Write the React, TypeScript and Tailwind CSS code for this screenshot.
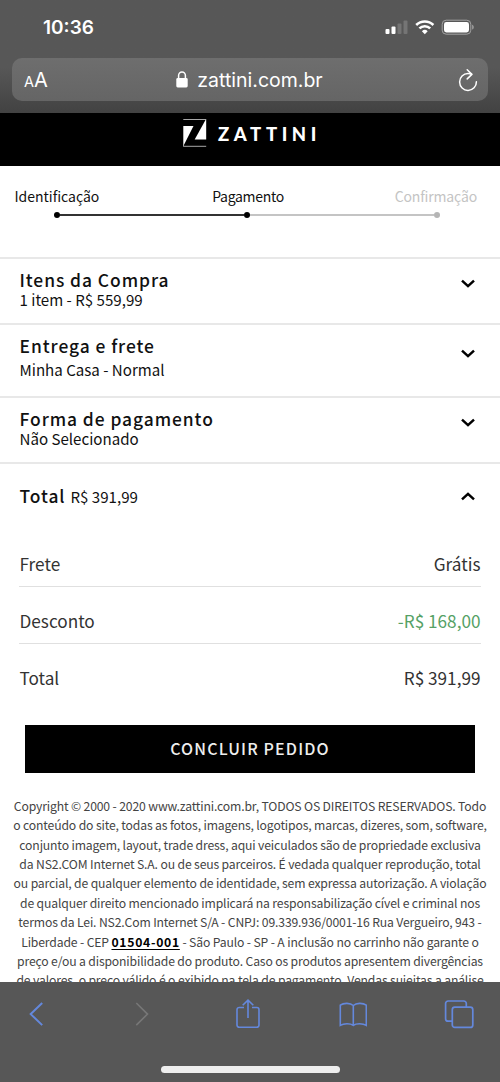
import type { ReactNode } from "react";

const footerLines: ReactNode[] = [
  "Copyright © 2000 - 2020 www.zattini.com.br, TODOS OS DIREITOS RESERVADOS. Todo",
  "o conteúdo do site, todas as fotos, imagens, logotipos, marcas, dizeres, som, software,",
  "conjunto imagem, layout, trade dress, aqui veiculados são de propriedade exclusiva",
  "da NS2.COM Internet S.A. ou de seus parceiros. É vedada qualquer reprodução, total",
  "ou parcial, de qualquer elemento de identidade, sem expressa autorização. A violação",
  "de qualquer direito mencionado implicará na responsabilização cível e criminal nos",
  "termos da Lei. NS2.Com Internet S/A - CNPJ: 09.339.936/0001-16 Rua Vergueiro, 943 -",
  <>
    Liberdade - CEP{" "}
    <a className="font-bold tracking-[0.7px] text-black underline underline-offset-2">01504-001</a> - São Paulo - SP - A
    inclusão no carrinho não garante o
  </>,
  "preço e/ou a disponibilidade do produto. Caso os produtos apresentem divergências",
  "de valores, o preço válido é o exibido na tela de pagamento. Vendas sujeitas a análise",
];

function Chevron({ up = false }: { up?: boolean }) {
  return (
    <svg width="14" height="9" viewBox="0 0 14 9" fill="none" stroke="#000" strokeWidth="2.5">
      <path d={up ? "M1 7.4 7 1.9l6 5.5" : "M1 1.6 7 7.1l6-5.5"} />
    </svg>
  );
}

function StatusBar() {
  return (
    <div className="flex h-[58px] justify-between pl-[43px] pr-[26px]">
      <span className="mt-[15px] font-['Inter'] text-[19px] leading-[26px] font-semibold">10:36</span>
      <svg className="mt-[19px]" width="89" height="17" viewBox="0 0 89 17">
        <rect x="0.5" y="10" width="4" height="5" rx="1" fill="#fff" />
        <rect x="6.5" y="7.5" width="4" height="7.5" rx="1" fill="#fff" />
        <rect x="12.5" y="4.5" width="4" height="10.5" rx="1" fill="#757575" />
        <rect x="18.5" y="1.5" width="4" height="13.5" rx="1" fill="#757575" />
        <g fill="none" stroke="#fff" strokeWidth="2.5">
          <path d="M31.2 6a12.2 12.2 0 0 1 17.2 0" />
          <path d="M34.4 9.4a7.6 7.6 0 0 1 10.8 0" />
        </g>
        <path d="M39.8 15.2 36.9 12.2a4.1 4.1 0 0 1 5.8 0z" fill="#fff" />
        <rect x="57.2" y="1.2" width="28.6" height="14" rx="4" fill="none" stroke="#a3a3a3" strokeWidth="1" />
        <rect x="59" y="3" width="25" height="10.4" rx="2.4" fill="#fff" />
        <path d="M87.2 5.8c2 .6 2 4.2 0 4.8z" fill="#a3a3a3" />
      </svg>
    </div>
  );
}

function AddressBar() {
  return (
    <div className="mx-3 flex h-[43px] items-center justify-between rounded-[10px] bg-linear-to-b from-[#6e6e6e] to-[#656565] pl-3 pr-[10px] font-['Inter']">
      <div className="flex w-[49px] items-baseline pt-px">
        <span className="text-[14.5px]">A</span>
        <span className="text-[20px]">A</span>
      </div>
      <div className="flex items-center gap-[9px]">
        <svg width="12" height="17" viewBox="0 0 12 17">
          <rect x="0.3" y="7" width="11.4" height="9.5" rx="1.4" fill="#fff" />
          <path d="M2.6 8V4.6a3.4 3.6 0 0 1 6.8 0V8" fill="none" stroke="#fff" strokeWidth="1.5" />
        </svg>
        <span className="pt-[2px] text-[19.5px] whitespace-nowrap">zattini.com.br</span>
      </div>
      <div className="flex w-[52px] justify-end">
        <svg width="20" height="24" viewBox="0 0 20 24" fill="none" stroke="#fff" strokeWidth="1.5" strokeLinecap="round" strokeLinejoin="round">
          <path d="M13.6 6.3C12.5 5.8 11.3 5.6 10 5.6a8.4 8.4 0 1 0 8.4 8.2" />
          <path d="m9.2 1.8 4.7 4.6-4.7 4.5" />
        </svg>
      </div>
    </div>
  );
}

function Brand() {
  return (
    <div className="flex h-[53px] items-start bg-black pl-[183px] pt-[5px]">
      <svg width="24" height="29" viewBox="0 0 24 29">
        <path d="M.3 1.5h22.9M.3 28.3h22.9" stroke="#bbb" strokeWidth=".9" />
        <path d="M.3 8h10.2L.9 27v1.3H.3z" fill="#fff" />
        <path d="M23.2 1.5v20H11.7L22.5 2z" fill="#fff" />
      </svg>
      <span className="ml-[11px] mt-[6px] font-['Lato'] text-[18.5px] leading-[20px] font-black tracking-[4.6px] text-white">
        ZATTINI
      </span>
    </div>
  );
}

function Steps() {
  return (
    <div className="h-[91px] pt-[19px] text-[14px] leading-[22px]">
      <div className="flex justify-between pl-[14.5px] pr-[23px]">
        <span className="w-[87px] whitespace-nowrap">Identificação</span>
        <span className="tracking-[-0.3px]">Pagamento</span>
        <span className="tracking-[-0.15px] whitespace-nowrap text-[#c4c4c4]">Confirmação</span>
      </div>
      <div className="mt-[5px] ml-[54px] flex w-[386px] items-center">
        <i className="size-[6px] rounded-full bg-black" />
        <i className="h-[1.5px] flex-1 bg-[#333]" />
        <i className="size-[6px] rounded-full bg-black" />
        <i className="h-[1.5px] flex-1 bg-[#c4c4c4]" />
        <i className="size-[6px] rounded-full bg-[#b5b5b5]" />
      </div>
    </div>
  );
}

function Section({ title, text, className, textClass }: { title: string; text: string; className: string; textClass: string }) {
  return (
    <section className={`flex justify-between border-t-2 border-[#e8e8e8] pl-[19.5px] pr-[25px] ${className}`}>
      <div>
        <h2 className="text-[17.4px] leading-[20px] font-medium tracking-[0.95px]">{title}</h2>
        <p className={`text-[15.1px] leading-[20px] ${textClass}`}>{text}</p>
      </div>
      <Chevron />
    </section>
  );
}

function Row({ label, value, className = "" }: { label: string; value: string; className?: string }) {
  return (
    <div className="flex h-[57px] items-center justify-between border-b-[1.5px] border-[#e0e0e0] px-[0.5px] pt-[12px] text-[17.2px] text-[#333] last:border-white">
      <span>{label}</span>
      <span className={className}>{value}</span>
    </div>
  );
}

function Toolbar() {
  return (
    <nav className="h-[100px] bg-[#575757]">
      <div className="flex items-start pl-[28px] pt-[16px]">
        <svg width="15" height="32" viewBox="0 0 15 32" fill="none" stroke="#6488dc" strokeWidth="2">
          <path d="M14.2 5 2.7 16.1l11.5 11" />
        </svg>
        <svg className="ml-[91px]" width="15" height="32" viewBox="0 0 15 32" fill="none" stroke="#777" strokeWidth="1.6">
          <path d="m2.3 5 11.2 11.1L2.3 27.1" />
        </svg>
        <svg className="ml-[86px]" width="26" height="32" viewBox="0 0 26 32" fill="none" stroke="#6488dc" strokeWidth="1.6">
          <path d="M9 9.5H4.2A2.2 2.2 0 0 0 2 11.7v15.4A2.2 2.2 0 0 0 4.2 29.3h17.6A2.2 2.2 0 0 0 24 27.1V11.7A2.2 2.2 0 0 0 21.8 9.5H17" />
          <path d="M13 20V2.2M7.7 7.3 13 2.1l5.3 5.2" />
        </svg>
        <svg className="ml-[78px]" width="28" height="32" viewBox="0 0 28 32" fill="none" stroke="#6488dc" strokeWidth="1.6">
          <path d="M14.3 27.2V7.5C11.3 4.8 4.8 4.6 1.3 7.2v20.2c3.5-2.2 10-2.2 13 0 3-2.2 9.5-2.2 13 0V7.2C23.8 4.6 17.3 4.8 14.3 7.5" />
        </svg>
        <svg className="ml-[77px]" width="30" height="32" viewBox="0 0 30 32" fill="none" stroke="#6488dc" strokeWidth="1.7">
          <rect x="8.3" y="9.2" width="20.5" height="20.2" rx="2.5" />
          <path d="M8.3 23.2H4.1A2.5 2.5 0 0 1 1.6 20.7V5.5A2.5 2.5 0 0 1 4.1 3h15.7A2.5 2.5 0 0 1 22.3 5.5v3.7" />
        </svg>
      </div>
      <div className="mx-auto mt-[36px] h-[7px] w-[179px] rounded-full bg-[#eee]" />
    </nav>
  );
}

export default function App() {
  return (
    <div className="flex h-[1082px] w-[500px] flex-col overflow-hidden bg-white font-['Noto_Sans_CJK_SC','Noto_Sans',sans-serif] text-[#111]">
      <header className="h-[113px] shrink-0 bg-linear-to-b from-[#575757] from-60% to-[#424242] text-white">
        <StatusBar />
        <AddressBar />
      </header>
      <main className="h-[869px] shrink-0 overflow-hidden">
        <Brand />
        <Steps />
        <Section title="Itens da Compra" text="1 item - R$ 559,99" className="h-[66px] pt-[11px] [&>svg]:mt-[9px]" textClass="-mt-px" />
        <Section title="Entrega e frete" text="Minha Casa - Normal" className="h-[73px] pt-[11px] [&>svg]:mt-[13px]" textClass="mt-[3px]" />
        <Section title="Forma de pagamento" text="Não Selecionado" className="h-[66px] pt-[11px] [&>svg]:mt-[9px]" textClass="-mt-px" />
        <section className="flex h-[67px] items-center justify-between border-t-2 border-[#e8e8e8] pl-[19.5px] pr-[25px]">
          <div className="-mt-px flex items-baseline gap-[5px]">
            <span className="text-[17.4px] font-medium tracking-[0.95px]">Total</span>
            <span className="text-[15.1px]">R$ 391,99</span>
          </div>
          <Chevron up />
        </section>
        <div className="mx-[19px] mt-px">
          <Row label="Frete" value="Grátis" />
          <Row label="Desconto" value="-R$ 168,00" className="text-[#55a165]" />
          <Row label="Total" value="R$ 391,99" />
        </div>
        <button className="mx-[25px] mt-[24px] flex h-[48px] w-[450px] items-center justify-center bg-black pb-[2px] text-[16px] font-medium tracking-[1.15px] text-[#eee]">
          CONCLUIR PEDIDO
        </button>
        <footer className="mt-[24px] text-center text-[12.2px] leading-[19.36px] tracking-[-0.15px] text-[#444]">
          {footerLines.map((line, i) => (
            <p key={i} className="whitespace-nowrap">
              {line}
            </p>
          ))}
        </footer>
      </main>
      <Toolbar />
    </div>
  );
}
